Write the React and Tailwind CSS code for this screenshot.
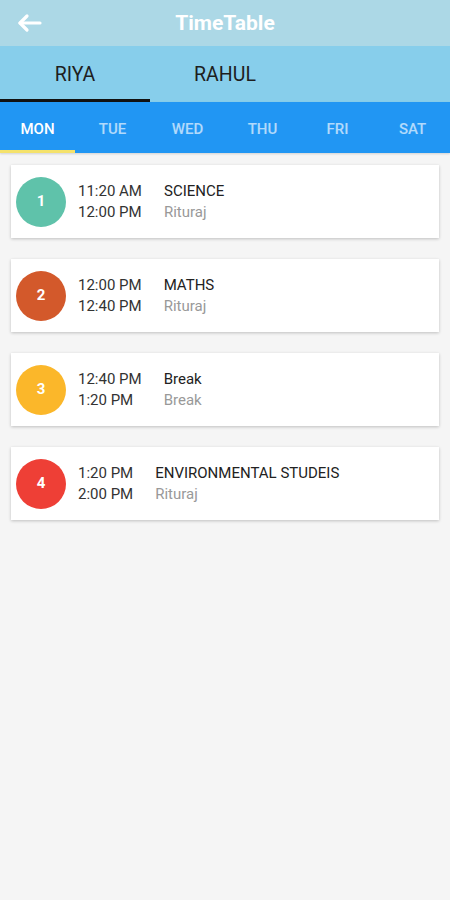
import React, { useState } from 'react';

const days = ['MON', 'TUE', 'WED', 'THU', 'FRI', 'SAT'];
const people = ['RIYA', 'RAHUL'];

const periods = [
    { id: 1, color: 'bg-[#5fc2aa]', start: '11:20 AM', end: '12:00 PM', subject: 'SCIENCE', teacher: 'Rituraj' },
    { id: 2, color: 'bg-[#d3592b]', start: '12:00 PM', end: '12:40 PM', subject: 'MATHS', teacher: 'Rituraj' },
    { id: 3, color: 'bg-[#fbb72a]', start: '12:40 PM', end: '1:20 PM', subject: 'Break', teacher: 'Break' },
    { id: 4, color: 'bg-[#ee3f36]', start: '1:20 PM', end: '2:00 PM', subject: 'ENVIRONMENTAL STUDEIS', teacher: 'Rituraj' },
];

const App = () => {
    const [person, setPerson] = useState(0);
    const [day, setDay] = useState(0);

    return (
        <div className="w-[450px] h-[900px] bg-[#f5f5f5] font-['Roboto',sans-serif] flex flex-col">
            <div className="h-[46px] bg-[#acd8e6] flex items-center relative shrink-0">
                <button className="pl-[17px] pr-2 h-full flex items-center">
                    <svg width="25" height="20" viewBox="0 0 25 20" fill="none" stroke="white" strokeWidth="3.2" strokeLinecap="round" strokeLinejoin="round">
                        <path d="M23 10H3" />
                        <path d="M10 3L3 10L10 17" />
                    </svg>
                </button>
                <h1 className="absolute left-0 right-0 top-[9px] text-center text-white text-[21px] leading-[28px] font-bold pointer-events-none">TimeTable</h1>
            </div>

            <div className="h-[56px] bg-[#87ceeb] flex shrink-0">
                {people.map((p, i) => (
                    <button
                        key={p}
                        onClick={() => setPerson(i)}
                        className={`w-[150px] flex items-center justify-center text-[19.5px] font-normal text-[#1e1e1e] border-b-[3px] pt-[5px] ${person === i ? 'border-[#111]' : 'border-transparent'}`}
                    >
                        {p}
                    </button>
                ))}
            </div>

            <div className="h-[51px] bg-[#2196f3] flex shrink-0 shadow-[0_1px_2px_rgba(0,0,0,0.15)]">
                {days.map((d, i) => (
                    <button
                        key={d}
                        onClick={() => setDay(i)}
                        className={`flex-1 flex items-center justify-center text-[15px] font-medium border-b-[3px] pt-[7px] ${day === i ? 'text-white border-[#f5e26b]' : 'text-white/65 border-transparent'}`}
                    >
                        {d}
                    </button>
                ))}
            </div>

            <div className="flex flex-col gap-[21px] px-[11px] pt-[12px]">
                {periods.map(item => (
                    <div key={item.id} className="h-[73px] bg-white shadow-[0_1px_3px_rgba(0,0,0,0.22)] flex items-center pl-[5px]">
                        <div className={`w-[50px] h-[50px] rounded-full ${item.color} flex items-center justify-center text-white text-[15px] font-bold`}>
                            {item.id}
                        </div>
                        <div className="ml-[12px] flex flex-col text-[15px] leading-[21px] text-[#333]">
                            <span>{item.start}</span>
                            <span>{item.end}</span>
                        </div>
                        <div className="ml-[22px] flex flex-col text-[15px] leading-[21px]">
                            <span className="text-[#222]">{item.subject}</span>
                            <span className="text-[#999]">{item.teacher}</span>
                        </div>
                    </div>
                ))}
            </div>
        </div>
    );
};

export default App;
